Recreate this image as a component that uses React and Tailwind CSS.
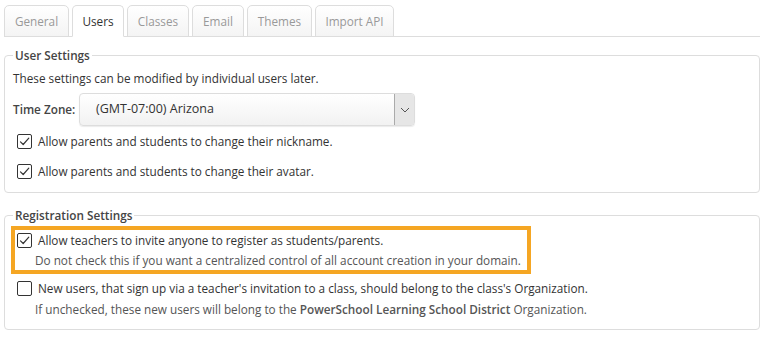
import React from "react";

function Box({ checked }) {
  return (
    <span className="inline-flex h-[15px] w-[15px] shrink-0 items-center justify-center rounded-[2px] border border-[#333] bg-white">
      {checked && (
        <svg width="13" height="13" viewBox="0 0 13 13" fill="none">
          <path d="M2.5 6.8 L5.2 9.5 L10.8 3.2" stroke="#333" strokeWidth="1.2" strokeLinecap="round" strokeLinejoin="round" />
        </svg>
      )}
    </span>
  );
}

const tabs = [
  { t: "General", w: "w-[65px]" },
  { t: "Users", w: "w-[52px]" },
  { t: "Classes", w: "w-[62px]" },
  { t: "Email", w: "w-[52px]" },
  { t: "Themes", w: "w-[65px]" },
  { t: "Import API", w: "w-[79px]" },
];

export default function App() {
  return (
    <div className="h-[337px] w-[766px] overflow-hidden bg-white pl-[4px] pr-[6px] pt-[5px] text-[11.75px] text-[#333]" style={{ fontFamily: '"Open Sans", "Liberation Sans", sans-serif' }}>
      <div className="flex h-[32px] gap-[3px] border-b border-[#ddd]">
        {tabs.map(({ t, w }) => {
          const active = t === "Users";
          return (
            <div
              key={t}
              className={
                "-mb-px flex items-center justify-center rounded-t-[5px] border leading-[18px] " +
                w +
                " " +
                (active
                  ? "border-[#ddd] border-b-white bg-white text-[#333]"
                  : "border-[#ddd] bg-gradient-to-b from-white to-[#f4f4f4] text-[#999]")
              }
            >
              {t}
            </div>
          );
        })}
      </div>

      <fieldset className="mt-[9px] rounded-[4px] border border-[#ddd] px-[8px] pb-[12px] pt-[5px]">
        <legend className="px-[2px] font-semibold leading-[18px] text-[#444]">User Settings</legend>
        <div className="leading-[18px]">These settings can be modified by individual users later.</div>
        <div className="mt-[6px] flex items-center">
          <span className="w-[66px] font-semibold text-[#444]">Time Zone:</span>
          <div className="flex h-[33px] w-[336px] items-stretch overflow-hidden rounded-[4px] border border-[#ddd] bg-gradient-to-b from-white to-[#f2f2f2] shadow-[0_1px_1px_rgba(0,0,0,0.08)]">
            <div className="flex flex-1 items-center pl-[16px] text-[12.5px] text-[#333]">(GMT-07:00) Arizona</div>
            <div className="flex w-[20px] items-center justify-center border-l border-[#aaa] bg-[#e6e6e6]">
              <svg width="10" height="6" viewBox="0 0 10 6" fill="none">
                <path d="M1 1 L5 5 L9 1" stroke="#555" strokeWidth="1" />
              </svg>
            </div>
          </div>
        </div>
        <div className="ml-[4px] mt-[6px] flex items-center gap-[6px] leading-[18px]">
          <Box checked />
          <span>Allow parents and students to change their nickname.</span>
        </div>
        <div className="ml-[4px] mt-[12px] flex items-center gap-[6px] leading-[18px]">
          <Box checked />
          <span>Allow parents and students to change their avatar.</span>
        </div>
      </fieldset>

      <fieldset className="mt-[13px] rounded-[4px] border border-[#ddd] px-[8px] pb-[10px] pt-[2px]">
        <legend className="px-[2px] font-semibold leading-[18px] text-[#444]">Registration Settings</legend>
        <div className="ml-[-2px] w-[520px] border-4 border-[#f5a623] px-[2px] leading-[20px]">
          <div className="flex items-center gap-[6px]">
            <Box checked />
            <span>Allow teachers to invite anyone to register as students/parents.</span>
          </div>
          <div className="whitespace-nowrap pl-[18px] text-[#555]">Do not check this if you want a centralized control of all account creation in your domain.</div>
        </div>
        <div className="mt-[4px] leading-[20px]">
          <div className="ml-[4px] flex items-center gap-[6px]">
            <Box />
            <span>New users, that sign up via a teacher's invitation to a class, should belong to the class's Organization.</span>
          </div>
          <div className="mt-[1px] pl-[22px] text-[#555]">
            If unchecked, these new users will belong to the <span className="font-semibold">PowerSchool Learning School District</span> Organization.
          </div>
        </div>
      </fieldset>
    </div>
  );
}
